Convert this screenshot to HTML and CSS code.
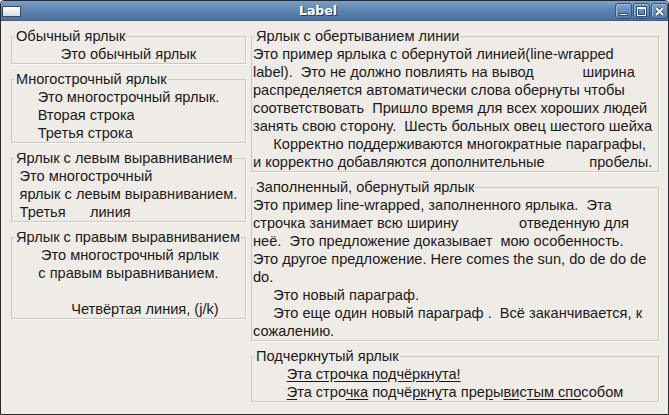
FILE: index.html
```html
<!DOCTYPE html>
<html lang="ru">
  <head>
    <meta charset="UTF-8" />
    <title>Label</title>
    <link rel="stylesheet" href="styles.css">
  </head>
  <body>
    <div class="window">
      <div class="titlebar">
        <span class="app-icon"></span>
        <span class="title">Label</span>
        <div class="wm-buttons">
          <span class="wm-btn">
            <svg width="11" height="11" viewBox="0 0 11 11"><rect x="1.5" y="7.5" width="8" height="2" fill="#fff" stroke="#2c4f78" stroke-width="1"/></svg>
          </span>
          <span class="wm-btn">
            <svg width="11" height="11" viewBox="0 0 11 11"><rect x="1.5" y="1.5" width="8" height="8" fill="none" stroke="#2c4f78" stroke-width="3"/><rect x="1.5" y="1.5" width="8" height="8" fill="none" stroke="#fff" stroke-width="1"/><line x1="1.5" y1="2.5" x2="9.5" y2="2.5" stroke="#fff" stroke-width="1"/></svg>
          </span>
          <span class="wm-btn">
            <svg width="11" height="11" viewBox="0 0 11 11"><path d="M2 2 L9 9 M9 2 L2 9" stroke="#2c4f78" stroke-width="3.4"/><path d="M2 2 L9 9 M9 2 L2 9" stroke="#fff" stroke-width="1.8"/></svg>
          </span>
        </div>
      </div>

      <div class="content">
        <div class="column col-left">
          <fieldset class="frame">
            <legend>Обычный ярлык</legend>
            <div class="label"><span class="text">Это обычный ярлык</span></div>
          </fieldset>

          <fieldset class="frame">
            <legend>Многострочный ярлык</legend>
            <div class="label"><span class="text">Это многострочный ярлык.<br>Вторая строка<br>Третья строка</span></div>
          </fieldset>

          <fieldset class="frame">
            <legend>Ярлык с левым выравниванием</legend>
            <div class="label"><span class="text">Это многострочный<br>ярлык с левым выравниванием.<br>Третья      линия</span></div>
          </fieldset>

          <fieldset class="frame">
            <legend>Ярлык с правым выравниванием</legend>
            <div class="label"><span class="text right">Это многострочный ярлык<br>с правым выравниванием.<br><br>Четвёртая линия, (j/k)</span></div>
          </fieldset>
        </div>

        <div class="column col-right">
          <fieldset class="frame">
            <legend>Ярлык с обертыванием линии</legend>
            <div class="label wrapped">Это пример ярлыка с обернутой линией(line-wrapped<br>label).  Это не должно повлиять на вывод            ширина<br>распределяется автоматически слова обернуты чтобы<br>соответствовать  Пришло время для всех хороших людей<br>занять свою сторону.  Шесть больных овец шестого шейха<br>     Корректно поддерживаются многократные параграфы,<br>и корректно добавляются дополнительные           пробелы.</div>
          </fieldset>

          <fieldset class="frame">
            <legend>Заполненный, обернутый ярлык</legend>
            <div class="label wrapped">Это пример line-wrapped, заполненного ярлыка.  Эта<br>строчка занимает всю ширину               отведенную для<br>неё.  Это предложение доказывает  мою особенность.<br>Это другое предложение. Here comes the sun, do de do de<br>do.<br>     Это новый параграф.<br>     Это еще один новый параграф .  Всё заканчивается, к<br>сожалению.</div>
          </fieldset>

          <fieldset class="frame">
            <legend>Подчеркнутый ярлык</legend>
            <div class="label"><span class="text"><u>Эта строчка подчёркнута!</u><br><u>Э</u>та стро<u>чка</u> по<u>д</u>чё<u>рк</u>н<u>у</u>та пре<u>р</u>ы<u>ви</u>с<u>тым спо</u>собом</span></div>
          </fieldset>
        </div>
      </div>
    </div>
  </body>
</html>
```

FILE: styles.css
```css
body {
  margin: 0;
  background-color: #efebe7;
}
.window {
  width: 669px;
  height: 415px;
  box-sizing: border-box;
  border: 1px solid #2a2a2a;
  border-radius: 4px 4px 0 0;
  background-color: #efebe7;
  color: #1a1a1a;
  font-family: "Liberation Sans", Arial, sans-serif;
  font-size: 14.6px;
  overflow: hidden;
}
.titlebar {
  height: 20px;
  display: flex;
  align-items: center;
  padding: 0 0 0 1px;
  background: linear-gradient(#7c9fc5, #5a82ae 55%, #4a729f);
  border-bottom: 1px solid #3b5f88;
  box-sizing: border-box;
}
.app-icon {
  width: 17px;
  height: 9px;
  margin-top: 2px;
  border: 1px solid #3a4a5c;
  border-radius: 1px;
  background: linear-gradient(#ffffff, #d6dce4);
}
.title {
  flex: 1;
  text-align: center;
  color: #fff;
  font-family: "DejaVu Sans", sans-serif;
  font-weight: bold;
  font-size: 12.5px;
  text-shadow: 1px 1px 0 #1f3a5a;
}
.wm-buttons {
  display: flex;
  gap: 1px;
  padding-top: 1px;
}
.wm-btn {
  width: 17px;
  height: 16px;
  box-sizing: border-box;
  border: 1px solid #2f5680;
  border-radius: 3px;
  background: linear-gradient(#7fa2c8, #5279a5);
  box-shadow: inset 1px 1px 0 #9db9d8;
  display: flex;
  align-items: center;
  justify-content: center;
}
.content {
  display: flex;
  align-items: flex-start;
  gap: 5px;
  padding: 6px 8px 0 10px;
}
.column {
  display: flex;
  flex-direction: column;
  gap: 6px;
}
.col-left {
  width: 235px;
}
.col-right {
  width: 408px;
}
.frame {
  margin: 0;
  padding: 0;
  min-width: 0;
  border: 1px solid #cdc8c2;
  box-shadow: 1px 1px 0 #fbfaf9;
}
.frame legend {
  margin-left: 2px;
  padding: 0 1px 0 2px;
  line-height: 18px;
}
.label {
  line-height: 18px;
  text-align: center;
  white-space: pre;
}
.label .text {
  display: inline-block;
  text-align: left;
}
.label .right {
  text-align: right;
}
.label.wrapped {
  text-align: left;
  padding-left: 1px;
}
u {
  text-underline-offset: 2px;
}
```
